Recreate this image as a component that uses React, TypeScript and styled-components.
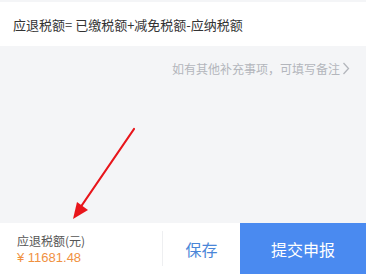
import styled, { createGlobalStyle } from 'styled-components';

const GlobalStyle = createGlobalStyle`
  html, body {
    margin: 0;
    padding: 0;
    background: #f4f5f7;
  }
  body {
    font-family: "Noto Sans CJK SC", "Liberation Sans", sans-serif;
  }
`;

const Page = styled.div`
  position: relative;
  display: flex;
  flex-direction: column;
  width: 366px;
  height: 274px;
  padding-top: 2px;
  box-sizing: border-box;
  background: #f4f5f7;
  overflow: hidden;
`;

const FormulaRow = styled.div`
  display: flex;
  align-items: center;
  height: 44px;
  padding: 0 13px;
  background: #fff;
  font-size: 13px;
  color: #333;
`;

const Body = styled.div`
  flex: 1;
  display: flex;
  flex-direction: column;
  align-items: flex-end;
  padding: 14px 16px 0 0;
`;

const NoteLink = styled.div`
  display: flex;
  align-items: center;
  gap: 2px;
  font-size: 12px;
  color: #b3b6bc;
`;

const Footer = styled.div`
  display: flex;
  height: 51px;
  background: #fff;
`;

const Amount = styled.div`
  display: flex;
  flex-direction: column;
  justify-content: center;
  width: 145px;
  padding-left: 17px;
  gap: 1px;
`;

const AmountLabel = styled.span`
  font-size: 12px;
  color: #555;
`;

const AmountValue = styled.span`
  font-family: "Liberation Sans", "Noto Sans CJK SC", sans-serif;
  font-size: 13px;
  color: #f0913f;
`;

const Divider = styled.div`
  width: 1px;
  margin: 8px 0;
  background: #eeeff1;
`;

const ActionButton = styled.button<{ $primary?: boolean }>`
  border: none;
  padding: 0;
  cursor: pointer;
  font-family: inherit;
  font-size: 16px;
  width: ${({ $primary }) => ($primary ? '126px' : '77px')};
  background: ${({ $primary }) => ($primary ? '#4a8af0' : '#fff')};
  color: ${({ $primary }) => ($primary ? '#fff' : '#4a86d8')};
`;

const Arrow = styled.svg`
  position: absolute;
  left: 0;
  top: 0;
  pointer-events: none;
`;

export default function App() {
  return (
    <Page>
      <GlobalStyle />
      <FormulaRow>应退税额= 已缴税额+减免税额-应纳税额</FormulaRow>
      <Body>
        <NoteLink>
          如有其他补充事项，可填写备注
          <svg width="8" height="13" viewBox="0 0 8 13">
            <path d="M1.5 1 L6.5 6.5 L1.5 12" fill="none" stroke="#b3b6bc" strokeWidth="1.3" />
          </svg>
        </NoteLink>
      </Body>
      <Footer>
        <Amount>
          <AmountLabel>应退税额(元)</AmountLabel>
          <AmountValue>¥ 11681.48</AmountValue>
        </Amount>
        <Divider />
        <ActionButton>保存</ActionButton>
        <ActionButton $primary>提交申报</ActionButton>
      </Footer>
      <Arrow width="366" height="274" viewBox="0 0 366 274">
        <line x1="134" y1="129" x2="80" y2="208" stroke="#e8151b" strokeWidth="2.2" strokeLinecap="round" />
        <path d="M73 219 L77 202 L88 210 Z" fill="#e8151b" />
      </Arrow>
    </Page>
  );
}
